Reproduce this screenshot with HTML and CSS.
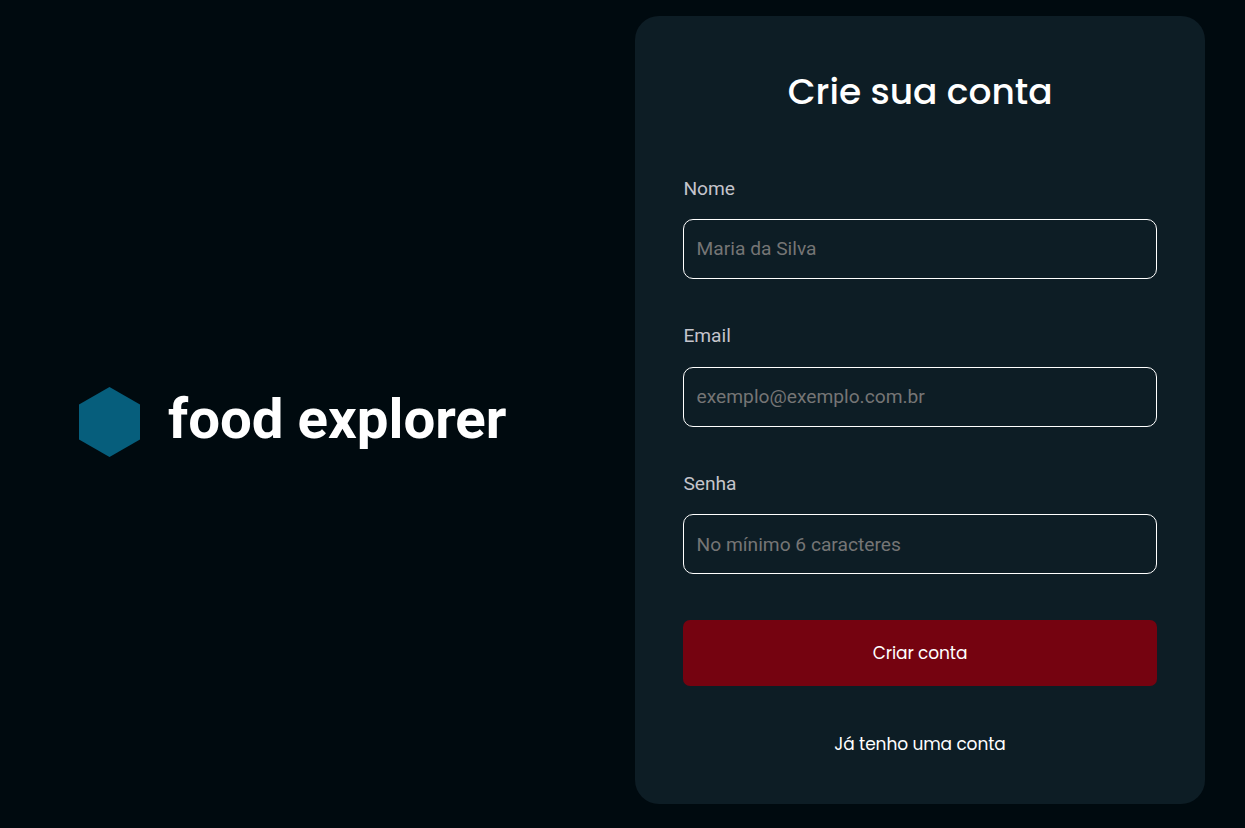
FILE: index.html
```html
<!DOCTYPE html>
<html lang="pt-BR">
<head>
<meta charset="utf-8">
<title>food explorer</title>
<link rel="stylesheet" href="styles.css">
</head>
<body>
<main class="page">
  <div class="brand">
    <svg class="brand-mark" width="61" height="70" viewBox="0 0 61 70"><path d="M30.5 0 61 17.5v35L30.5 70 0 52.5v-35z" fill="#065e7c"/></svg>
    <h1 class="brand-name">food explorer</h1>
  </div>
  <form class="card">
    <h2 class="title">Crie sua conta</h2>
    <div class="field">
      <label class="label" for="name">Nome</label>
      <input class="input" id="name" type="text" placeholder="Maria da Silva">
    </div>
    <div class="field">
      <label class="label" for="email">Email</label>
      <input class="input" id="email" type="email" placeholder="exemplo@exemplo.com.br">
    </div>
    <div class="field">
      <label class="label" for="password">Senha</label>
      <input class="input input-password" id="password" type="password" placeholder="No mínimo 6 caracteres">
    </div>
    <button class="button" type="button">Criar conta</button>
    <a class="link">Já tenho uma conta</a>
  </form>
</main>
</body>
</html>
```
FILE: styles.css
```css
* { box-sizing: border-box; margin: 0; padding: 0; }
body { background: #000a0f; color: #fff; font-family: Roboto, sans-serif; }
.page { height: 828px; padding: 16px 40px 24px 79px; display: flex; justify-content: space-between; align-items: center; }
.brand { display: flex; align-items: center; gap: 28px; padding-top: 24px; }
.brand-mark { display: block; }
.brand-name { font-size: 56.4px; line-height: 66px; font-weight: 700; white-space: nowrap; padding-bottom: 7px; }
.card { width: 570px; height: 788px; border-radius: 24px; background: #0d1d25; padding: 48px 48px 0; display: flex; flex-direction: column; }
.title, .button, .link { font-family: Poppins, sans-serif; }
.title { height: 54px; line-height: 56px; text-align: center; font-size: 36px; font-weight: 500; margin-bottom: 57.8px; padding-left: 0.4px; }
.field { display: flex; flex-direction: column; flex: none; height: 147.6px; }
.label { font-size: 19.2px; line-height: 26px; color: #c4c4cc; padding-left: 0.4px; margin-bottom: 17.4px; }
.input { height: 60px; border: 1px solid #fff; border-radius: 10px; background: transparent; padding: 0 12.6px 1px; font: 19.2px Roboto, sans-serif; color: #fff; }
.input-password { padding-bottom: 0; }
.input::placeholder { color: #757575; }
.button { height: 66px; flex: none; border: 0; border-radius: 7px; background: #750310; color: #fff; font-size: 17px; font-weight: 400; letter-spacing: -0.1px; margin-top: 1.4px; }
.link { margin-top: 45px; text-align: center; font-size: 17px; line-height: 26px; font-weight: 400; letter-spacing: -0.1px; }
```
